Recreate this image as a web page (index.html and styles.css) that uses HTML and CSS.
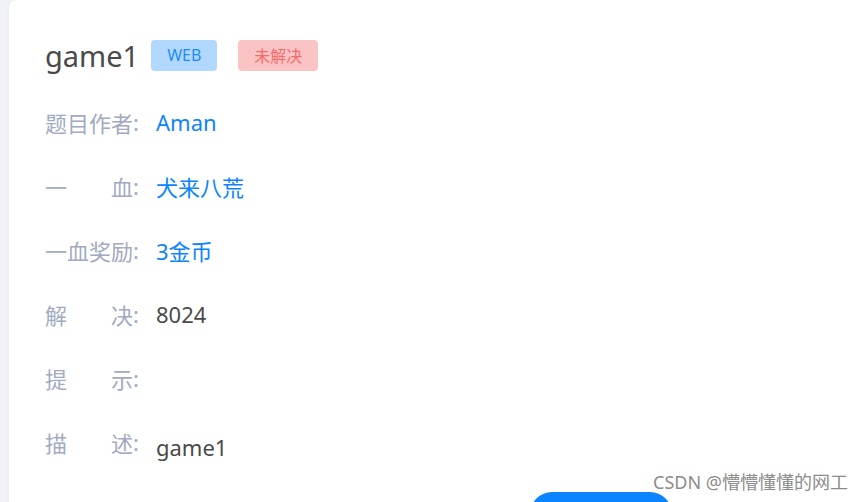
FILE: index.html
```html
<!DOCTYPE html>
<html>
<head>
    <title>game1</title>
    <link rel="stylesheet" href="styles.css">
</head>
<body>
    <div class="page">
        <div class="card">
            <div class="title-row">
                <h1>game1</h1>
                <span class="tag tag-web">WEB</span>
                <span class="tag tag-danger">未解决</span>
            </div>
            <div class="info-row">
                <span class="label">题目作者</span><span class="colon">:</span>
                <span class="value link">Aman</span>
            </div>
            <div class="info-row">
                <span class="label">一血</span><span class="colon">:</span>
                <span class="value link">犬来八荒</span>
            </div>
            <div class="info-row">
                <span class="label">一血奖励</span><span class="colon">:</span>
                <span class="value link">3金币</span>
            </div>
            <div class="info-row">
                <span class="label">解决</span><span class="colon">:</span>
                <span class="value">8024</span>
            </div>
            <div class="info-row">
                <span class="label">提示</span><span class="colon">:</span>
                <span class="value"></span>
            </div>
            <div class="info-row">
                <span class="label">描述</span><span class="colon">:</span>
                <span class="value desc">game1</span>
            </div>
            <div class="footer">
                <button type="button" class="btn-primary"></button>
            </div>
        </div>
    </div>
    <div class="watermark">CSDN @懵懵懂懂的网工</div>
</body>
</html>
```

FILE: styles.css
```css
* {
    box-sizing: border-box;
}
body {
    margin: 0;
    height: 502px;
    overflow: hidden;
    background-color: #F0F2F5;
    font-family: "Noto Sans", "Noto Sans CJK SC", sans-serif;
}
.page {
    padding-left: 9px;
}
.card {
    background-color: white;
    border-radius: 8px 0 0 0;
    box-shadow: 0px 0px 6px rgba(0, 0, 0, 0.04);
    padding: 31px 0 0 36px;
    height: 520px;
}
.title-row {
    display: flex;
    align-items: center;
    height: 48px;
    margin-bottom: 12px;
}
.title-row h1 {
    margin: 0;
    font-size: 29px;
    font-weight: normal;
    color: #4A4A4A;
    line-height: 1;
}
.tag {
    display: inline-flex;
    align-items: center;
    height: 31px;
    padding: 0 16px;
    border-radius: 4px;
    font-size: 16px;
}
.tag-web {
    margin-left: 12px;
    background-color: #B3D8FF;
    color: #1A8CFF;
}
.tag-danger {
    margin-left: 21px;
    background-color: #FBC4C4;
    color: #F56C6C;
}
.info-row {
    display: flex;
    align-items: center;
    height: 64px;
    font-size: 22px;
    padding-bottom: 2px;
}
.info-row .label {
    width: 88px;
    color: #A2AAC2;
    text-align: justify;
    text-align-last: justify;
}
.info-row .colon {
    color: #A2AAC2;
    width: 23px;
}
.info-row .value {
    color: #4A4A4A;
}
.info-row .link {
    color: #0D84FF;
}
.info-row .desc {
    padding-top: 9px;
}
.footer {
    padding: 17px 0 0 485px;
}
.btn-primary {
    width: 142px;
    height: 44px;
    border: none;
    border-radius: 22px;
    background-color: #0A84FF;
}
.watermark {
    position: absolute;
    right: 16px;
    bottom: 8px;
    font-size: 18px;
    color: #8C8C8C;
    text-shadow: 0 0 2px white, 0 0 1px white;
}
```
